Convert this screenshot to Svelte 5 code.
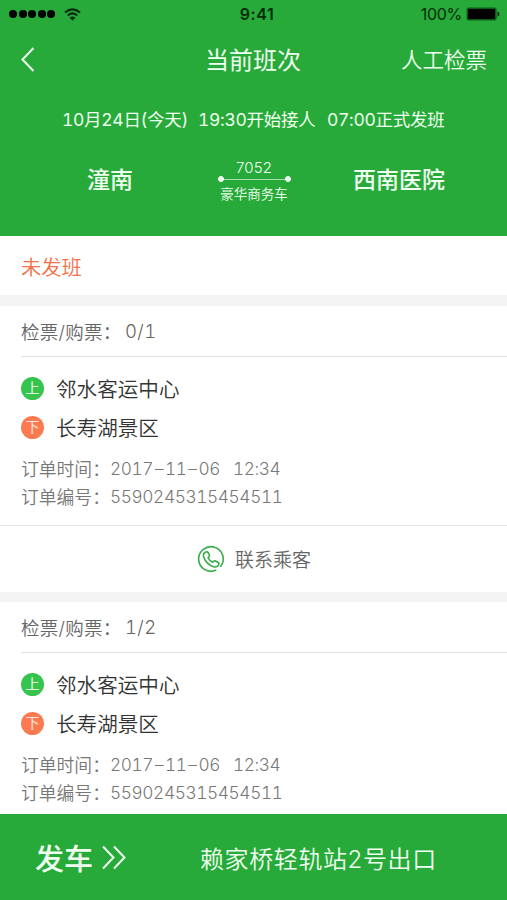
<script>
  const orders = [
    { checked: '0/1', from: '邻水客运中心', to: '长寿湖景区', date: '2017–11–06', time: '12:34', no: '5590245315454511', contact: true },
    { checked: '1/2', from: '邻水客运中心', to: '长寿湖景区', date: '2017–11–06', time: '12:34', no: '5590245315454511', contact: false }
  ];
</script>

<div class="screen">
  <header>
    <div class="status">
      <div class="signal">
        <i></i><i></i><i></i><i></i><i></i>
        <svg class="wifi" width="17" height="13" viewBox="0 0 17 13" fill="none" stroke="#062b0b" stroke-width="2">
          <path d="M1 4.600Q8.500-1.800 16 4.600M3.700 7.500Q8.500 3.300 13.300 7.500" />
          <path d="M5.500 9.800Q8.500 7.400 11.500 9.800L8.500 12.400Z" fill="#062b0b" stroke="none" />
        </svg>
      </div>
      <b class="clock">9:41</b>
      <div class="power">
        <span>100%</span>
        <svg width="34" height="14" viewBox="0 0 34 14">
          <rect x="0.600" y="0.600" width="30" height="12.800" rx="2" fill="#0a5a18" />
          <rect x="2" y="2" width="27" height="10" rx="1" fill="#000" />
          <path d="M31.500 4.500Q33.500 5 33.500 7T31.500 9.500Z" fill="#042b08" />
        </svg>
      </div>
    </div>

    <nav>
      <svg class="back" width="14" height="25" viewBox="0 0 14 25" fill="none" stroke="#effff0" stroke-width="2">
        <path d="M12.500 1L1.500 12.500L12.500 24" />
      </svg>
      <h1>当前班次</h1>
      <span class="manual">人工检票</span>
    </nav>

    <div class="when">
      <span class="day">10月24日(今天)</span>
      <span class="pickup">19:30开始接人</span>
      <span class="depart">07:00正式发班</span>
    </div>

    <div class="route">
      <strong class="start">潼南</strong>
      <div class="bus">
        <span class="num">7052</span>
        <div class="line"></div>
        <span class="kind">豪华商务车</span>
      </div>
      <strong class="end">西南医院</strong>
    </div>
  </header>

  <div class="state">未发班</div>

  <main>
    {#each orders as order}
      <section>
        <div class="count"><span class="count-label">检票/购票：</span><span class="val">{order.checked}</span></div>
        <div class="body">
          <div class="stop"><span class="dot up">上</span><span>{order.from}</span></div>
          <div class="stop"><span class="dot down">下</span><span>{order.to}</span></div>
          <div class="meta first">
            <span class="label">订单时间：</span>
            <span class="date">{#each order.date as ch}{#if ch === '–'}<span class="dash">{ch}</span>{:else}{ch}{/if}{/each}</span>
            <span class="time">{order.time}</span>
          </div>
          <div class="meta"><span class="label">订单编号：</span><span class="no">{order.no}</span></div>
        </div>
        {#if order.contact}
          <div class="contact">
            <svg width="28" height="28" viewBox="0 0 28 28" fill="none" stroke="#35ad49" stroke-width="1.600" stroke-linecap="round" stroke-linejoin="round">
              <path d="M18.700 25.300A12.300 12.300 0 1 1 23.800 21.300" />
              <path d="M9.400 6.800C7 7.600 6 9.700 6.700 12C7.900 16.400 12.300 20.500 16.700 21.800C19 22.400 21 21.400 21.800 19.600C22.200 18.700 21.800 17.900 21.100 17.500L18.500 16C17.700 15.600 17.100 15.800 16.600 16.400L15.800 17.300C13.800 16.600 12 14.900 11.100 12.700L12 11.900C12.600 11.300 12.700 10.600 12.300 9.900L11.100 7.600C10.700 6.900 10.200 6.600 9.400 6.800Z" />
            </svg>
            <span class="call">联系乘客</span>
          </div>
        {/if}
      </section>
    {/each}
  </main>

  <footer>
    <span class="go">发车</span>
    <svg width="25" height="25" viewBox="0 0 25 25" fill="none" stroke="#effff0" stroke-width="2">
      <path d="M1 1.500L11.500 12.500L1 23.500" /><path d="M12 1.500L22.500 12.500L12 23.500" />
    </svg>
    <span class="place">赖家桥轻轨站2号出口</span>
  </footer>
</div>

<style>
  :global(body) { margin: 0; }
  .screen {
    width: 507px; height: 900px; overflow: hidden; display: flex; flex-direction: column;
    background: #fff; white-space: nowrap;
    font-family: "Inter", "Noto Sans CJK SC", sans-serif;
  }
  header { height: 236px; flex: none; background: #27aa3a; color: #effff0; box-sizing: border-box; }
  .status { height: 28px; display: grid; grid-template-columns: 1fr auto 1fr; align-items: center; color: #052d0a; }
  .signal { display: flex; align-items: center; padding-left: 9px; gap: 1.500px; }
  .signal i { width: 8px; height: 8px; border-radius: 50%; background: #000; }
  .wifi { margin-left: 7px; }
  .clock { font-size: 16px; font-weight: 600; letter-spacing: 0.600px; margin-left: 7px; }
  .power { display: flex; justify-content: flex-end; align-items: center; gap: 4px; padding-right: 7px; font-size: 16px; letter-spacing: -0.300px; }
  nav { height: 63px; display: grid; grid-template-columns: 205px 1fr auto; align-items: center; padding-right: 20px; }
  .back { margin-left: 21px; }
  h1 { margin: 2px 0 0; font-size: 24px; line-height: 36px; font-weight: 400; }
  .manual { font-size: 21.500px; line-height: 32px; font-weight: 350; }
  .when { height: 54px; display: flex; align-items: center; padding-left: 62px; font-size: 17.500px; letter-spacing: -0.300px; font-variant-numeric: tabular-nums; }
  .day { width: 136px; }
  .pickup { width: 129px; }
  .route { height: 66px; display: flex; align-items: center; padding-left: 87px; }
  strong { font-weight: 500; font-size: 23px; }
  .start { width: 130px; }
  .bus { width: 74px; display: flex; flex-direction: column; align-items: center; margin: 8px 62px 0 0; }
  .num { font-size: 15px; line-height: 18px; font-weight: 300; letter-spacing: 0.100px; position: relative; top: 1px; }
  .line { width: 73px; height: 6px; background: radial-gradient(circle at 3px 3px, #effff0 2.600px, transparent 3.200px), radial-gradient(circle at 70px 3px, #effff0 2.600px, transparent 3.200px), linear-gradient(#a5dfac, #a5dfac) 3px 2.500px / 67px 1px no-repeat; }
  .kind { font-size: 13.500px; line-height: 24px; font-weight: 350; }
  .state { height: 59px; flex: none; display: flex; align-items: center; padding-left: 21px; color: #f07048; font-size: 20.300px; font-weight: 350; border-bottom: 11px solid #f4f4f4; }
  main { flex: 1; min-height: 0; overflow: hidden; }
  section { height: 286px; border-bottom: 10px solid #f4f4f4; color: #666; font-weight: 350; }
  .count { height: 50px; margin-left: 21px; border-bottom: 1px solid #e2e2e2; display: flex; align-items: center; font-size: 18.500px; }
  .count-label { width: 104px; letter-spacing: 0.250px; }
  .val { font-variant-numeric: tabular-nums; letter-spacing: 0.400px; }
  .body { height: 157px; padding: 11px 0 0 21px; border-bottom: 1px solid #e4e4e4; box-sizing: content-box; }
  .stop { height: 39px; display: flex; align-items: center; gap: 12px; font-size: 20.600px; color: #333; }
  .dot { width: 23px; height: 23px; border-radius: 50%; font-size: 14px; line-height: 22px; text-align: center; color: #e9ffe9; font-weight: 400; position: relative; top: 1px; }
  .up { background: #36c44c; }
  .down { background: #fb7b50; color: #ffe6dc; }
  .meta { height: 28px; display: flex; align-items: center; font-size: 17.300px; color: #777; font-variant-numeric: tabular-nums; letter-spacing: -0.400px; }
  .first { margin-top: 8px; }
  .label { width: 89px; font-size: 17.800px; letter-spacing: 0; }
  .dash { margin: 0 1.800px; }
  .time { margin-left: 13px; }
  .contact { height: 66px; display: flex; align-items: center; padding-left: 197px; gap: 10px; font-size: 19px; }
  .call { padding-bottom: 2px; }
  footer { height: 86px; flex: none; background: #27aa3a; color: #effff0; display: flex; align-items: center; padding-left: 35px; box-sizing: border-box; }
  .go { font-size: 29px; font-weight: 500; margin-right: 9px; }
  .place { margin-left: 73px; font-size: 24px; letter-spacing: 0.600px; font-weight: 350; }
</style>
